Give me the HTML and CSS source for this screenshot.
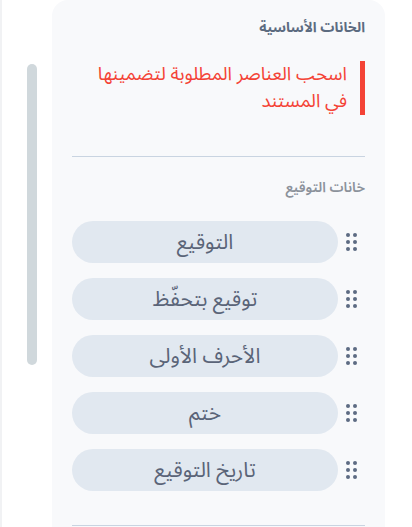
FILE: index.html
```html
<!DOCTYPE html>
<html lang="ar">
<head>
<meta charset="utf-8">
<link rel="stylesheet" href="styles.css">
</head>
<body>
<div class="page">
  <div class="side">
    <div class="scroll"></div>
  </div>
  <div class="panel" dir="rtl">
    <div class="title">الخانات الأساسية</div>
    <div class="note">اسحب العناصر المطلوبة لتضمينها في المستند</div>
    <hr class="divider">
    <div class="subtitle">خانات التوقيع</div>
    <div class="items">
      <div class="item"><span class="handle"><i></i><i></i><i></i><i></i><i></i><i></i></span><div class="pill">التوقيع</div></div>
      <div class="item"><span class="handle"><i></i><i></i><i></i><i></i><i></i><i></i></span><div class="pill">توقيع بتحفّظ</div></div>
      <div class="item"><span class="handle"><i></i><i></i><i></i><i></i><i></i><i></i></span><div class="pill">الأحرف الأولى</div></div>
      <div class="item"><span class="handle"><i></i><i></i><i></i><i></i><i></i><i></i></span><div class="pill">ختم</div></div>
      <div class="item"><span class="handle"><i></i><i></i><i></i><i></i><i></i><i></i></span><div class="pill">تاريخ التوقيع</div></div>
    </div>
    <hr class="divider bottom">
  </div>
</div>
</body>
</html>
```
FILE: styles.css
```css
html, body {
  margin: 0;
  padding: 0;
  background: #ffffff;
  height: 100%;
  overflow: hidden;
}
.page {
  display: flex;
  height: 527px;
  font-family: "Noto Sans Arabic", "DejaVu Sans", sans-serif;
}
.side {
  width: 50px;
  border-left: 2px solid #f1f2f4;
  flex: none;
}
.scroll {
  width: 10px;
  height: 301px;
  margin: 64px 0 0 25px;
  background: #d0d8dc;
  border-radius: 5px;
}
.panel {
  width: 333px;
  flex: none;
  background: #f8f9fb;
  border-radius: 16px 16px 0 0;
  padding: 18px 20px 0 20px;
  box-sizing: border-box;
}
.title {
  font-size: 14px;
  font-weight: bold;
  color: #5c6b80;
  line-height: 20px;
}
.note {
  margin-top: 23px;
  border-right: 5px solid #f44336;
  padding: 0 13px 0 10px;
  color: #f44336;
  font-size: 18.5px;
  line-height: 27px;
}
.divider {
  border: 0;
  border-top: 1px solid #c9d4e1;
  margin: 41px 0 0 0;
}
.subtitle {
  margin-top: 21px;
  font-size: 14px;
  font-weight: 600;
  color: #8c929b;
  line-height: 20px;
}
.items {
  margin-top: 23px;
  display: flex;
  flex-direction: column;
  gap: 15px;
}
.item {
  display: flex;
  align-items: center;
  gap: 8px;
}
.handle {
  width: 11px;
  display: grid;
  grid-template-columns: 4px 4px;
  column-gap: 3px;
  row-gap: 3px;
  flex: none;
  margin-right: 8px;
}
.handle i {
  width: 4px;
  height: 4px;
  border-radius: 50%;
  background: #5d6b82;
}
.pill {
  flex: 1;
  height: 42px;
  border-radius: 21px;
  background: #e1e8f0;
  color: #5a6478;
  font-size: 21px;
  font-stretch: 125%;
  display: flex;
  align-items: center;
  justify-content: center;
}
.divider.bottom {
  margin-top: 34px;
}
```
